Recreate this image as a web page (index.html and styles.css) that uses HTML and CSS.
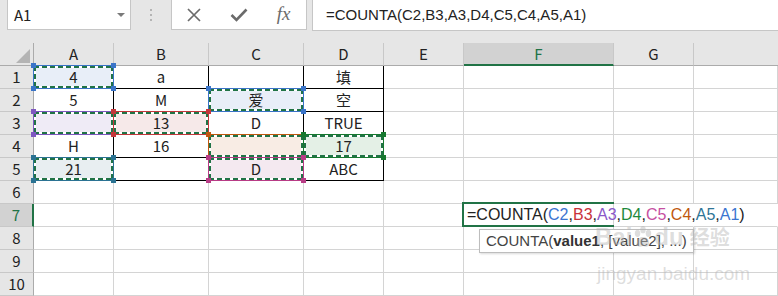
FILE: index.html
```html
<!DOCTYPE html>
<html lang="zh-CN">
<head>
    <meta charset="UTF-8">
    <title>COUNTA</title>
    <link rel="stylesheet" href="styles.css">
</head>
<body>
    <div class="fbar">
        <div class="namebox"><span>A1</span><i class="arrow"></i></div>
        <div class="grip"><i></i><i></i><i></i></div>
        <div class="btns">
            <div class="btn">
                <svg width="14" height="14" viewBox="0 0 14 14"><path d="M1 1L13 13M13 1L1 13" stroke="#6b6b6b" stroke-width="1.7"/></svg>
            </div>
            <div class="btn">
                <svg width="18" height="14" viewBox="0 0 18 14"><path d="M1.5 7L6.5 12L16.5 1.5" fill="none" stroke="#6b6b6b" stroke-width="2.6"/></svg>
            </div>
            <div class="btn fx">fx</div>
        </div>
        <div class="formula">=COUNTA(C2,B3,A3,D4,C5,C4,A5,A1)</div>
    </div>

    <div class="sheet">
        <!-- column headers -->
        <div class="corner"><i class="tri"></i></div>
        <div class="ch">A</div>
        <div class="ch">B</div>
        <div class="ch">C</div>
        <div class="ch">D</div>
        <div class="ch">E</div>
        <div class="ch sel">F</div>
        <div class="ch">G</div>
        <div class="ch last"></div>

        <!-- row 1 -->
        <div class="rh">1</div>
        <div class="c t f-blue"><span class="rng blue"></span>4</div>
        <div class="c t">a</div>
        <div class="c t"></div>
        <div class="c t">填</div>
        <div class="c"></div><div class="c"></div><div class="c"></div><div class="c"></div>

        <!-- row 2 -->
        <div class="rh">2</div>
        <div class="c t">5</div>
        <div class="c t">M</div>
        <div class="c t f-blue"><span class="rng blue"></span>爱</div>
        <div class="c t">空</div>
        <div class="c"></div><div class="c"></div><div class="c"></div><div class="c"></div>

        <!-- row 3 -->
        <div class="rh">3</div>
        <div class="c t f-purple"><span class="rng purple"></span></div>
        <div class="c t f-red"><span class="rng red"></span>13</div>
        <div class="c t">D</div>
        <div class="c t">TRUE</div>
        <div class="c"></div><div class="c"></div><div class="c"></div><div class="c"></div>

        <!-- row 4 -->
        <div class="rh">4</div>
        <div class="c t">H</div>
        <div class="c t">16</div>
        <div class="c t f-orange"><span class="rng orange"></span></div>
        <div class="c t f-green"><span class="rng green"></span>17</div>
        <div class="c"></div><div class="c"></div><div class="c"></div><div class="c"></div>

        <!-- row 5 -->
        <div class="rh">5</div>
        <div class="c t f-teal"><span class="rng teal"></span>21</div>
        <div class="c t"></div>
        <div class="c t f-pink"><span class="rng pink"></span>D</div>
        <div class="c t">ABC</div>
        <div class="c"></div><div class="c"></div><div class="c"></div><div class="c"></div>

        <!-- row 6 -->
        <div class="rh">6</div>
        <div class="c"></div><div class="c"></div><div class="c"></div><div class="c"></div>
        <div class="c"></div><div class="c"></div><div class="c"></div><div class="c"></div>

        <!-- row 7 -->
        <div class="rh sel">7</div>
        <div class="c"></div><div class="c"></div><div class="c"></div><div class="c"></div>
        <div class="c"></div>
        <div class="c edit">=COUNTA(<span class="k-blue">C2</span>,<span class="k-red">B3</span>,<span class="k-purple">A3</span>,<span class="k-green">D4</span>,<span class="k-pink">C5</span>,<span class="k-orange">C4</span>,<span class="k-teal">A5</span>,<span class="k-blue">A1</span>)<span class="active"></span></div>
        <div class="c ov"></div>
        <div class="c ov"></div>

        <!-- row 8 -->
        <div class="rh">8</div>
        <div class="c"></div><div class="c"></div><div class="c"></div><div class="c"></div>
        <div class="c"></div><div class="c"></div><div class="c"></div><div class="c"></div>

        <!-- row 9 -->
        <div class="rh">9</div>
        <div class="c"></div><div class="c"></div><div class="c"></div><div class="c"></div>
        <div class="c"></div><div class="c"></div><div class="c"></div><div class="c"></div>

        <!-- row 10 -->
        <div class="rh">10</div>
        <div class="c"></div><div class="c"></div><div class="c"></div><div class="c"></div>
        <div class="c"></div><div class="c"></div><div class="c"></div><div class="c"></div>

        <div class="tip">COUNTA(<b>value1</b>, [value2], ...)</div>

        <div class="wm">
            <div class="wm-logo">Bai<svg width="20" height="22" viewBox="0 0 22 24"><ellipse cx="5" cy="8" rx="3" ry="4"/><ellipse cx="11" cy="4" rx="3" ry="4"/><ellipse cx="17" cy="8" rx="3" ry="4"/><path d="M4 20C4 14 8 12 11 12C14 12 18 14 18 20C18 23 14 23 11 22C8 23 4 23 4 20Z"/></svg>du<span class="wm-cn">经验</span></div>
            <div class="wm-url">jingyan.baidu.com</div>
        </div>
    </div>
</body>
</html>
```

FILE: styles.css
```css
* {
    box-sizing: border-box;
}
body {
    margin: 0;
    font-family: "Noto Sans CJK SC", "Noto Sans", sans-serif;
    color: #222;
    background-color: #fff;
    overflow: hidden;
}

/* formula bar */
.fbar {
    display: flex;
    height: 43px;
    background-color: #e6e6e6;
}
.namebox {
    width: 124px;
    height: 30px;
    margin-left: 7px;
    padding: 0 5px 0 6px;
    display: flex;
    align-items: center;
    justify-content: space-between;
    background-color: #fff;
    border: 1px solid #c6c6c6;
    border-top: none;
    font-size: 15px;
}
.arrow {
    border-top: 4px solid #7a7a7a;
    border-left: 4px solid transparent;
    border-right: 4px solid transparent;
}
.grip {
    width: 40px;
    height: 30px;
    display: flex;
    flex-direction: column;
    align-items: center;
    justify-content: center;
    gap: 3px;
}
.grip i {
    width: 2px;
    height: 2px;
    background-color: #b4b4b4;
}
.btns {
    width: 136px;
    height: 30px;
    display: flex;
    background-color: #fff;
    border: 1px solid #c6c6c6;
    border-top: none;
}
.btn {
    flex: 1;
    display: flex;
    align-items: center;
    justify-content: center;
}
.fx {
    font-family: "Liberation Serif", serif;
    font-style: italic;
    font-size: 19px;
    color: #6b6b6b;
    padding-bottom: 2px;
}
.formula {
    flex: 1;
    height: 31px;
    margin-left: 5px;
    padding-left: 13px;
    background-color: #fff;
    border-left: 1px solid #c6c6c6;
    border-bottom: 1px solid #c6c6c6;
    font-family: "Liberation Sans", sans-serif;
    font-size: 15px;
    line-height: 30px;
}

/* sheet grid */
.sheet {
    position: relative;
    display: grid;
    grid-template-columns: 34px 80px 95px 95px 80px 80px 150px 80px 1fr;
    grid-template-rows: repeat(11, 23px);
    background-color: #fff;
}
.corner {
    display: flex;
    align-items: flex-end;
    justify-content: flex-end;
    padding: 0 3px 2px 0;
    background-color: #e6e6e6;
    border-right: 1px solid #ababab;
    border-bottom: 1px solid #ababab;
}
.tri {
    width: 0;
    height: 0;
    border-left: 14px solid transparent;
    border-bottom: 14px solid #b4b4b4;
}
.ch {
    background-color: #e6e6e6;
    border-right: 1px solid #c8c8c8;
    border-bottom: 1px solid #ababab;
    text-align: center;
    font-size: 15px;
    line-height: 22px;
}
.ch.sel {
    background-color: #d2d2d2;
    color: #217346;
    border-bottom: 2px solid #217346;
    line-height: 21px;
}
.ch.last {
    border-right: none;
}
.rh {
    background-color: #e6e6e6;
    border-right: 1px solid #ababab;
    border-bottom: 1px solid #c8c8c8;
    text-align: center;
    font-size: 15px;
    line-height: 22px;
}
.rh.sel {
    background-color: #d2d2d2;
    color: #217346;
    border-right: 2px solid #217346;
}
.c {
    position: relative;
    border-right: 1px solid #d4d4d4;
    border-bottom: 1px solid #d4d4d4;
    text-align: center;
    font-size: 15px;
    line-height: 22px;
}
.c.t {
    border-color: #000;
}
.c.ov {
    border-right-color: transparent;
}

/* referenced ranges */
.f-blue { background-color: #e8eef8; }
.f-red { background-color: #f6e9e9; }
.f-purple { background-color: #efebf6; }
.f-green { background-color: #e4f0e6; }
.f-pink { background-color: #f4e9f0; }
.f-orange { background-color: #f8ece4; }
.f-teal { background-color: #e8eef1; }

.rng {
    position: absolute;
    top: -1px;
    left: -1px;
    right: -1px;
    bottom: -1px;
    z-index: 1;
    border: 1px solid var(--rc);
}
.rng::before {
    content: "";
    position: absolute;
    top: 0;
    left: 0;
    right: 0;
    bottom: 0;
    background:
        repeating-linear-gradient(90deg, #217346 0 5px, #fff 5px 8px) top / 100% 2px no-repeat,
        repeating-linear-gradient(90deg, #217346 0 5px, #fff 5px 8px) bottom / 100% 2px no-repeat,
        repeating-linear-gradient(180deg, #217346 0 5px, #fff 5px 8px) left / 2px 100% no-repeat,
        repeating-linear-gradient(180deg, #217346 0 5px, #fff 5px 8px) right / 2px 100% no-repeat;
}
.rng::after {
    content: "";
    position: absolute;
    top: -3px;
    left: -3px;
    right: -3px;
    bottom: -3px;
    background-image:
        linear-gradient(var(--rc), var(--rc)),
        linear-gradient(var(--rc), var(--rc)),
        linear-gradient(var(--rc), var(--rc)),
        linear-gradient(var(--rc), var(--rc));
    background-size: 5px 5px;
    background-position: 0 0, 100% 0, 0 100%, 100% 100%;
    background-repeat: no-repeat;
}
.blue { --rc: #3a74c8; }
.red { --rc: #c4373b; }
.purple { --rc: #7f58c0; }
.green { --rc: #17792f; }
.pink { --rc: #b83c86; }
.orange { --rc: #c0580f; }
.teal { --rc: #2b7393; }

/* cell being edited */
.c.edit {
    text-align: left;
    padding-left: 3px;
    white-space: nowrap;
    font-family: "Liberation Sans", sans-serif;
    font-size: 16px;
}
.active {
    position: absolute;
    top: -2px;
    left: -2px;
    right: -1px;
    bottom: -1px;
    z-index: 2;
    border: 2px solid #217346;
    border-right: none;
}
.k-blue { color: #3b74d0; }
.k-red { color: #c8323a; }
.k-purple { color: #8a57c9; }
.k-green { color: #1e8a3c; }
.k-pink { color: #c64fa2; }
.k-orange { color: #c0580d; }
.k-teal { color: #2e7597; }

.tip {
    position: absolute;
    left: 479px;
    top: 186px;
    height: 24px;
    padding: 0 6px;
    z-index: 3;
    background-color: #fff;
    border: 1px solid #bdbdbd;
    box-shadow: 1px 1px 2px rgba(0, 0, 0, 0.15);
    color: #444;
    font-family: "Liberation Sans", sans-serif;
    font-size: 15px;
    line-height: 22px;
    white-space: nowrap;
}
.tip b {
    color: #333;
}

/* watermark */
.wm {
    position: absolute;
    left: 595px;
    top: 176px;
    z-index: 4;
    color: rgba(180, 180, 180, 0.45);
}
.wm-logo {
    display: flex;
    align-items: center;
    font-family: "Liberation Sans", sans-serif;
    font-weight: bold;
    font-size: 24px;
    line-height: 36px;
}
.wm-logo svg {
    fill: rgba(180, 180, 180, 0.45);
    margin: 0 1px;
}
.wm-cn {
    margin-left: 6px;
    font-family: "Noto Sans CJK SC", sans-serif;
    font-size: 20px;
}
.wm-url {
    margin: 8px 0 0 2px;
    font-family: "Liberation Sans", sans-serif;
    font-size: 19px;
    line-height: 22px;
}
```
